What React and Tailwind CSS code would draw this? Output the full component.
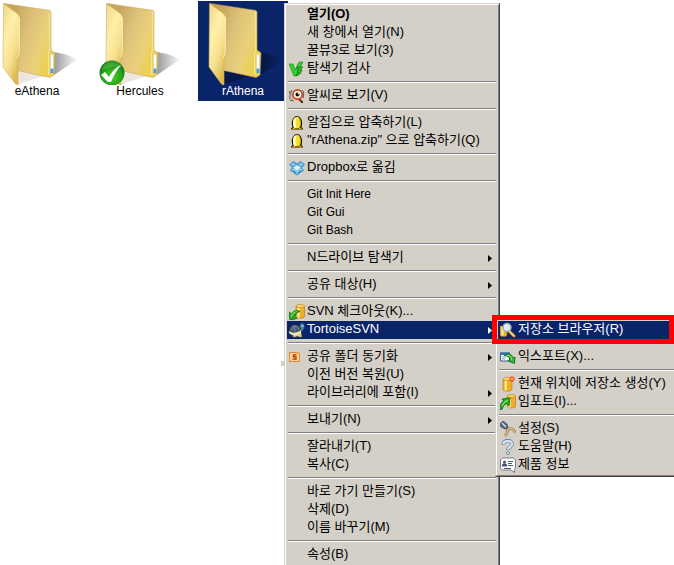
import React from 'react'

// --- Icons ---
const Svg = ({ children }) => (
    <svg viewBox="0 0 16 16" className="w-4 h-4 shrink-0" aria-hidden="true">{children}</svg>
)

const V3Icon = () => (
    <Svg>
        <path d="M0 3h4l2 6 4-8h4L7 15H5z" fill="#2ed32e" stroke="#128512" strokeWidth=".6" />
        <path d="M8 6h6l-3 3h2l-2 4-4 2 1-2 2-2H8l2-3H8z" fill="#2cc62c" stroke="#0b650b" strokeWidth=".7" />
    </Svg>
)

const AlseeIcon = () => (
    <Svg>
        <path d="M1 3c-2 3-1 6 0 8M3 2C1 5 1 9 4 13M13 2c2 2 2 5 1 8M1 12l4 1" stroke="#54483f" strokeWidth="1" fill="none" />
        <path d="M2 5l-1 6 4 2 1-3z" fill="#cdbba9" />
        <path d="M9 10l3 1 2 4-4-2z" fill="#c92c18" />
        <path d="M11 12l3 1v2h-2z" fill="#4b3428" />
        <circle cx="8.500" cy="6.500" r="4.600" fill="#fff6ec" stroke="#cb461d" strokeWidth="1.700" />
        <circle cx="8.500" cy="6.500" r="2" fill="#111" />
        <circle cx="9.500" cy="5.700" r=".7" fill="#fff" />
    </Svg>
)

const AlzipIcon = () => (
    <Svg>
        <path d="M2 14.500c0-1.500 1-2 1.500-2.500C1.500 7 4 1 8 1s6.500 6 4.500 11c.5.500 1.500 1 1.500 2.500z" fill="#171300" />
        <path d="M5 12.500C2.500 8 4.500 1.800 8 1.800S12.500 8 11 12c-1 2-5 2-6 .5z" fill="#f6e22a" />
        <path d="M6 4c-1.500 3-1 5 0 8" stroke="#fffccf" strokeWidth="2.400" fill="none" strokeLinecap="round" />
        <path d="M10.500 4c1 3 1 6 0 8" stroke="#d3b20a" strokeWidth="1" fill="none" />
        <path d="M3.500 13.500h2.500M10 13.500h2.500" stroke="#f5a300" strokeWidth="1.400" />
    </Svg>
)

const DropboxIcon = () => (
    <Svg>
        <path d="M4.500 1L8 3.500 11.500 1 16 4.500l-3 3 2 3-3 2-4 3-4-3-3-2 2-3-3-3z" fill="#3e94ca" />
        <path d="M4 7.500L8 5l4 2.500-4 3z" fill="#e1f1f9" />
        <path d="M1.500 4.500l3-2L7 4.500 4 6.500zM9 4.500l2.500-2 3 2-2.500 2z" fill="#8ac8ea" />
        <path d="M3 10l2-1 3 3 3-3 2 1M8 11v3" stroke="#a8d8f0" strokeWidth="1.400" fill="none" />
    </Svg>
)

const Barrel = () => (
    <>
        <path d="M7 2v10.500c0 2 8.500 2 8.500 0V2z" fill="#efae28" stroke="#b87610" strokeWidth=".6" />
        <path d="M9.500 3.500v10" stroke="#ffe590" strokeWidth="2.400" />
        <ellipse cx="11.250" cy="2" rx="4.250" ry="1.500" fill="#ffda6a" stroke="#b87610" strokeWidth=".6" />
    </>
)

const CheckoutIcon = () => (
    <Svg>
        <Barrel />
        <path d="M0 8l2.500 2C4 7 7 5.500 11 7.500 8 8 6.500 10 6 12.500l2 2L1 16z" fill="#25ab25" stroke="#08680b" strokeWidth=".8" />
        <path d="M2 13c1-3 3-5 6-5.500" stroke="#85e668" strokeWidth="1.200" fill="none" />
    </Svg>
)

const ImportIcon = () => (
    <Svg>
        <Barrel />
        <path d="M0 15.500c0-5 1-7 4-8.500L2 5l8-1-1 8-2-2.500c-3 1-4 3-5 6z" fill="#25ab25" stroke="#08680b" strokeWidth=".8" />
        <path d="M2 12c1-2.500 3-4.500 6-6" stroke="#85e668" strokeWidth="1.200" fill="none" />
    </Svg>
)

const TortoiseIcon = () => (
    <Svg>
        <path d="M3 10l1 5h3l1-1 2 1h3l-1-5z" fill="#e3cf9d" stroke="#6d5c35" strokeWidth=".5" />
        <path d="M10.500 6c-.5-5 3-6 4.500-4 1.500 3 0 7-4 8z" fill="#4482a8" stroke="#1c3c58" strokeWidth=".6" />
        <path d="M0 9c1-8 9-9 12-1-3 3-8 4-12 1z" fill="#4a5a72" stroke="#1a2436" strokeWidth=".7" />
        <path d="M2 8l3-4 4 1 1 3M5 4l1 5" stroke="#8392a7" strokeWidth=".8" fill="none" />
        <path d="M0 9c4 3 8 2 12-1v3c-4 3-9 3-12 0z" fill="#f1e3ba" />
        <circle cx="13.500" cy="4" r=".8" fill="#fff" />
    </Svg>
)

const SyncIcon = () => (
    <Svg>
        <path d="M0 3h9l2 2v8H0z" fill="#e7862b" />
        <path d="M1.500 4.500h7l1 1v6h-8z" fill="#ffc98c" stroke="#fbe2c0" strokeWidth=".8" />
        <path d="M7.500 5.800h-3v2h2.500v2.400H3.500" fill="none" stroke="#a03a00" strokeWidth="1.300" />
    </Svg>
)

const BrowserIcon = () => (
    <Svg>
        <path d="M0 4v9c0 2 7 2 7 0V4z" fill="#efae28" stroke="#a87018" strokeWidth=".6" />
        <path d="M2.500 5v8.500" stroke="#ffe590" strokeWidth="2.400" />
        <path d="M9 9l5 5" stroke="#d9982a" strokeWidth="3" strokeLinecap="round" />
        <path d="M9 9l5 5" stroke="#ffe08a" strokeWidth="1.200" />
        <circle cx="7" cy="5.500" r="4" fill="#dceefb" stroke="#9aabbd" strokeWidth="1.500" />
        <path d="M5 5c0-1 1-2 2-2" stroke="#fff" strokeWidth="1.200" fill="none" />
    </Svg>
)

const ExportIcon = () => (
    <Svg>
        <path d="M.5 4h9v8h-9z" fill="#f4f8fd" stroke="#35598d" strokeWidth="1" />
        <path d="M0 3.500h10v2.500H0z" fill="#3b6fb5" />
        <path d="M2 8h4M2 10h3" stroke="#8ca7cc" strokeWidth="1" />
        <path d="M4 6.500C8 3.500 12 5 13 9l2-1-.5 6.500L8 12l2-1.500c0-2-3-4-6-4z" fill="#35b52e" stroke="#08680b" strokeWidth=".8" />
        <path d="M7 6.200c3 0 4.500 2 5 5" stroke="#8be878" strokeWidth="1" fill="none" />
    </Svg>
)

const CreateIcon = () => (
    <Svg>
        <path d="M3 3v10.500c0 2.200 9 2.200 9 0V3z" fill="#efae28" stroke="#b87610" strokeWidth=".6" />
        <path d="M5.800 4.500v10" stroke="#ffe590" strokeWidth="2.400" />
        <ellipse cx="7.500" cy="3" rx="4.500" ry="1.600" fill="#ffda6a" stroke="#b87610" strokeWidth=".6" />
        <path d="M12 0v6M9 3h6M10 1l4 4M14 1l-4 4" stroke="#f0582c" strokeWidth="1.200" />
        <circle cx="12" cy="3" r="1.200" fill="#ffa468" />
    </Svg>
)

const SettingsIcon = () => (
    <Svg>
        <path d="M5 5l3 3c4-1 6 0 7 4M7 7c1 3 0 6-2 8" stroke="#8a6a35" strokeWidth="2.600" fill="none" />
        <path d="M6 6l2 2c4-1 6 0 7 4M7 7c1 3 0 6-2 8" stroke="#e6c88c" strokeWidth="1.300" fill="none" />
        <path d="M0 3l3-3 4 3 1 4-3 1-4-2z" fill="#5b6a7e" stroke="#354052" strokeWidth=".7" />
        <path d="M2 2l4 4" stroke="#d5dee9" strokeWidth="1.200" />
    </Svg>
)

const HelpIcon = () => (
    <Svg>
        <path d="M3.500 5.500C3 .5 12 .5 12 5c0 3-4 3-4 6" stroke="#6c8aa3" strokeWidth="3.800" fill="none" />
        <path d="M3.500 5C3.500 1 12 1 12 5c0 3-4 3-4 5.600" stroke="#d6e6f1" strokeWidth="2.200" fill="none" />
        <circle cx="8" cy="14" r="1.600" fill="#d6e6f1" stroke="#6c8aa3" strokeWidth=".9" />
    </Svg>
)

const AboutIcon = () => (
    <Svg>
        <path d="M2.500 1h11l2 2v8l-1 1.500v3L11 13H2.500l-2-2V3z" fill="#fff" stroke="#777c86" strokeWidth="1" />
        <circle cx="4.500" cy="5" r="1.500" fill="#4b5477" />
        <path d="M2 9.500v-2l1-1h3l1 1v2z" fill="#4b5477" />
        <path d="M8 4.500h5M8 6.500h4M8 8.500h5M4 11.500h7" stroke="#4b5477" strokeWidth="1" />
    </Svg>
)

// --- Menu Data ---
const submenuItems = [
    { label: '저장소 브라우저(R)', icon: BrowserIcon, active: true, framed: true },
    null,
    { label: '익스포트(X)...', icon: ExportIcon },
    null,
    { label: '현재 위치에 저장소 생성(Y)', icon: CreateIcon },
    { label: '임포트(I)...', icon: ImportIcon },
    null,
    { label: '설정(S)', icon: SettingsIcon },
    { label: '도움말(H)', icon: HelpIcon },
    { label: '제품 정보', icon: AboutIcon },
]

const menuItems = [
    { label: '열기(O)', bold: true },
    { label: '새 창에서 열기(N)' },
    { label: '꿀뷰3로 보기(3)' },
    { label: '탐색기 검사', icon: V3Icon },
    null,
    { label: '알씨로 보기(V)', icon: AlseeIcon },
    null,
    { label: '알집으로 압축하기(L)', icon: AlzipIcon },
    { label: '"rAthena.zip" 으로 압축하기(Q)', icon: AlzipIcon },
    null,
    { label: 'Dropbox로 옮김', icon: DropboxIcon },
    null,
    { label: 'Git Init Here', small: true },
    { label: 'Git Gui', small: true },
    { label: 'Git Bash', small: true },
    null,
    { label: 'N드라이브 탐색기', arrow: true },
    null,
    { label: '공유 대상(H)', arrow: true },
    null,
    { label: 'SVN 체크아웃(K)...', icon: CheckoutIcon },
    { label: 'TortoiseSVN', icon: TortoiseIcon, arrow: true, active: true, children: submenuItems },
    null,
    { label: '공유 폴더 동기화', icon: SyncIcon, arrow: true },
    { label: '이전 버전 복원(U)' },
    { label: '라이브러리에 포함(I)', arrow: true },
    null,
    { label: '보내기(N)', arrow: true },
    null,
    { label: '잘라내기(T)' },
    { label: '복사(C)' },
    null,
    { label: '바로 가기 만들기(S)' },
    { label: '삭제(D)' },
    { label: '이름 바꾸기(M)' },
    null,
    { label: '속성(B)' },
]

const folders = [
    { name: 'eAthena' },
    { name: 'Hercules', synced: true },
    { name: 'rAthena', selected: true },
]

function MenuItem({ item }) {
    const Icon = item.icon
    return (
        <li className="relative">
            <button
                type="button"
                role="menuitem"
                className={`flex items-center gap-0.5 w-full h-[18px] pl-0.5 pr-[5px] leading-[16px] text-left whitespace-nowrap ${item.small ? 'text-[12px]' : 'text-[13px]'} ${item.bold ? 'font-bold' : ''} ${item.active ? 'bg-[#0a246a] text-white' : 'text-black'}`}
            >
                {Icon ? <Icon /> : <span className="w-4 shrink-0" />}
                <span className="flex-1 pb-0.5">{item.label}</span>
                {item.arrow && (
                    <svg viewBox="0 0 4 7" className="w-1 h-[7px]" aria-hidden="true">
                        <path d="M0 0l4 3.500-4 3.500z" fill="currentColor" />
                    </svg>
                )}
            </button>
            {item.framed && <span className="absolute -left-1.5 -top-1.5 w-[182px] h-[29px] border-5 border-[#ff0000] pointer-events-none" />}
            {item.children && (
                <div className="absolute left-[208px] -top-[3px] w-[190px]">
                    <Menu items={item.children} />
                </div>
            )}
        </li>
    )
}

function Menu({ items }) {
    return (
        <div className="border border-t-[#d4d0c8] border-l-[#d4d0c8] border-r-[#404040] border-b-[#404040]">
            <ul role="menu" className="p-px bg-[#d4d0c8] border border-t-white border-l-white border-r-[#808080] border-b-[#808080]">
                {items.map((item, i) => item
                    ? <MenuItem key={i} item={item} />
                    : <li key={i} role="separator" className="h-[9px] px-px pt-[3px]"><div className="h-0.5 border-t border-t-[#808080] border-b border-b-white" /></li>
                )}
            </ul>
        </div>
    )
}

function FolderIcon({ synced, selected }) {
    return (
        <svg viewBox="-8 1 90 84" className="w-full h-[84px]" aria-hidden="true">
            <defs>
                <linearGradient id="back" x1="0" y1="0" x2="1" y2=".5">
                    <stop offset=".2" stopColor="#c4a55a" />
                    <stop offset=".5" stopColor="#dcc078" />
                    <stop offset=".8" stopColor="#ead07c" />
                    <stop offset="1" stopColor="#ecd052" />
                </linearGradient>
                <linearGradient id="flap" x1="0" y1="0" x2=".6" y2="1">
                    <stop offset="0" stopColor="#ecd68a" />
                    <stop offset=".4" stopColor="#fff0a9" />
                    <stop offset=".7" stopColor="#f6e08f" />
                    <stop offset="1" stopColor="#dcb951" />
                </linearGradient>
                <linearGradient id="shade" x1="0" y1="0" x2="1" y2="0">
                    <stop offset="0" stopColor="#000" stopOpacity=".4" />
                    <stop offset="1" stopColor="#000" stopOpacity="0" />
                </linearGradient>
                <radialGradient id="ball" cx=".5" cy=".65" r=".6">
                    <stop offset="0" stopColor="#4bd31f" />
                    <stop offset=".7" stopColor="#209d1b" />
                    <stop offset="1" stopColor="#0b6817" />
                </radialGradient>
            </defs>
            <path d="M54 52l10 2 14 5-12 8-12 8z" fill="url(#shade)" />
            <path d="M18 70l26 6-22 7-4 2z" fill={selected ? '#06184b' : '#eee6de'} />
            <path d="M4 3.500l46 7 1 1.500v38l4 3-1 22-4 2.500-32-7z" fill="url(#back)" stroke="#c6a650" strokeWidth=".6" />
            <path d="M49.500 12v38l-1 3v22" fill="none" stroke="#f6e39a" strokeWidth="1.200" />
            <path d="M50.500 54l3 1v17h-3z" fill="#fff" stroke="#d4c79d" strokeWidth=".5" />
            <path d="M50.500 68.500h3V73h-3z" fill="#4b9cf0" />
            <path d="M3.500 3.500l14.500 10.500 2 3.500v36l-2 4.500v27.500l-3-2L3 67z" fill="url(#flap)" stroke="#cfae55" strokeWidth=".6" />
            <path d="M19.300 17.500v36l-2 4" fill="none" stroke="#fff7c8" strokeWidth=".8" />
            {synced && (
                <g>
                    <circle cx="9" cy="73" r="12.500" fill="url(#ball)" />
                    <path d="M-1 70c2-12 18-13 20-2-7-3-13-1-20 2z" fill="#78d561" opacity=".4" />
                    <path d="M-2 75l4-3 4 5c3-6 7-10 12-12-4 5-7 10-10 17H5z" fill="#fff" />
                </g>
            )}
        </svg>
    )
}

function App() {
    return (
        <div className="relative h-screen overflow-hidden bg-white pt-px font-['Liberation_Sans','Noto_Sans_CJK_KR',sans-serif]">
            {/* Desktop folders */}
            <main className="flex gap-[13px] -ml-2">
                {folders.map(folder => (
                    <button
                        key={folder.name}
                        type="button"
                        className={`w-[90px] shrink-0 pb-1 text-center text-[12px] leading-[12px] ${folder.selected ? 'bg-[#0a246a] text-white' : 'text-black'}`}
                    >
                        <FolderIcon synced={folder.synced} selected={folder.selected} />
                        <span className="block">{folder.name}</span>
                    </button>
                ))}
            </main>

            {/* Context menu */}
            <div className="absolute left-[284px] top-[3px] w-[216px]">
                <Menu items={menuItems} />
            </div>
            <span className="absolute left-[281px] top-[361px] w-[3px] h-[5px] bg-[#d4d0c8]" />
        </div>
    )
}

export default App
